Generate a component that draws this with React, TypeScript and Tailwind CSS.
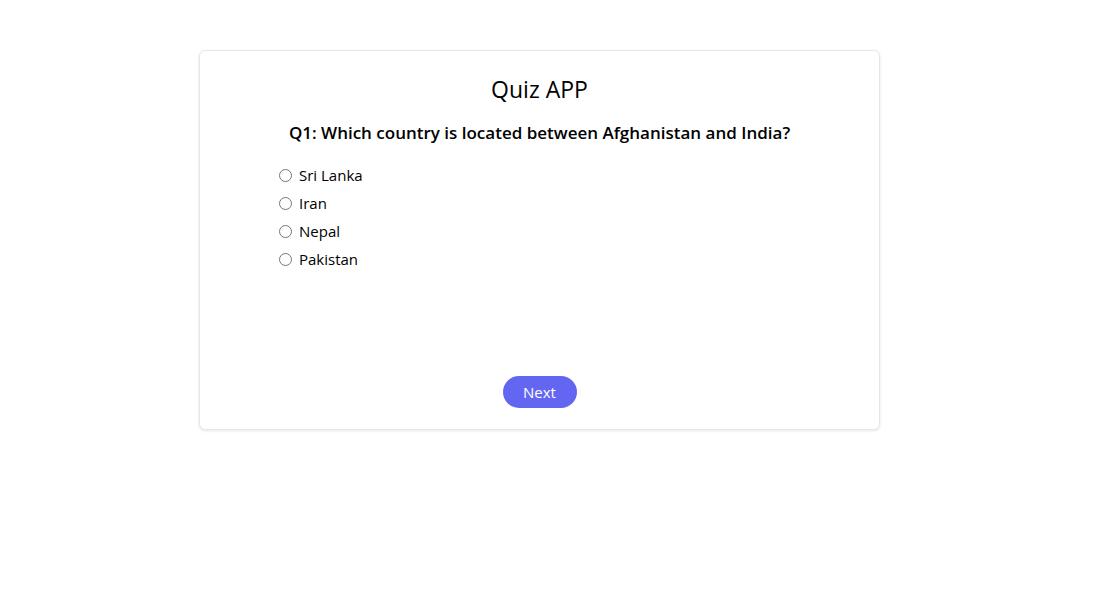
import { useState } from "react";

const options = ["Sri Lanka", "Iran", "Nepal", "Pakistan"];

export default function App() {
  const [picked, setPicked] = useState<string | null>(null);

  return (
    <div className="min-h-screen bg-white font-['Open_Sans',sans-serif] text-black">
      <div className="pt-[50px] pl-[199px]">
        <div className="flex h-[380px] w-[681px] flex-col rounded-md border border-gray-200 bg-white shadow-[0_1px_3px_rgba(0,0,0,0.1)]">
          <h1 className="mt-[23px] text-center text-[23px] leading-[30px]">Quiz APP</h1>
          <h2 className="mt-[17px] text-center text-[17px] font-semibold leading-[24px]">
            Q1: Which country is located between Afghanistan and India?
          </h2>
          <div className="mt-[19px] flex flex-col gap-[6px] pl-[79px]">
            {options.map((o) => (
              <label key={o} className="flex h-[22px] items-center gap-[7px] text-[15px]">
                <input
                  type="radio"
                  name="answer"
                  className="m-0 h-[13px] w-[13px]"
                  checked={picked === o}
                  onChange={() => setPicked(o)}
                />
                {o}
              </label>
            ))}
          </div>
          <div className="mt-auto mb-[21px] flex justify-center">
            <button className="h-[32px] w-[74px] rounded-full bg-[#6366f1] text-[15px] text-white">
              Next
            </button>
          </div>
        </div>
      </div>
    </div>
  );
}
